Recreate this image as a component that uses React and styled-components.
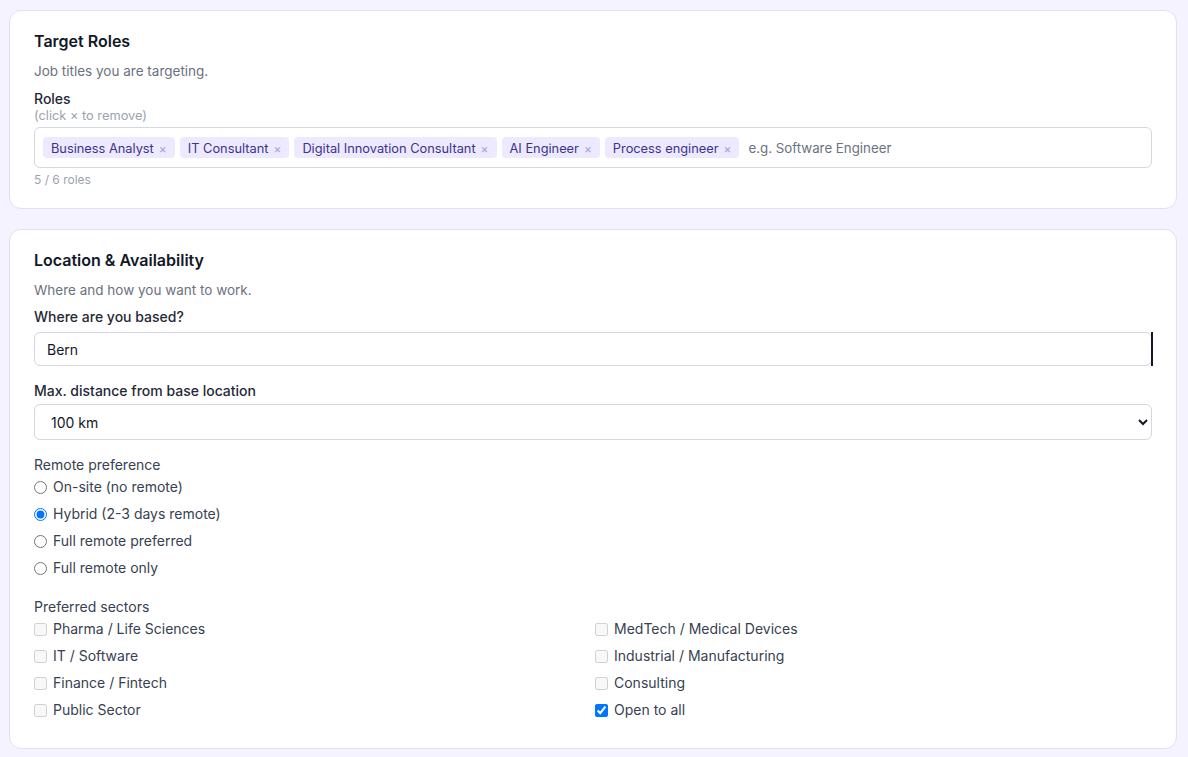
import React from 'react';
import styled, { createGlobalStyle } from 'styled-components';

const GlobalStyle = createGlobalStyle`
  html, body {
    margin: 0;
    padding: 0;
    background: #f5f3ff;
    font-family: Inter, "Noto Sans", sans-serif;
    color: #1f2937;
  }
  * { box-sizing: border-box; }
`;

const Page = styled.div`
  display: flex;
  flex-direction: column;
  gap: 20px;
  padding: 10px 11px 8px 9px;
`;

const Card = styled.section`
  background: #fff;
  border: 1px solid #e2def5;
  border-radius: 12px;
  padding: 20px 24px 20px 24px;
  display: flex;
  flex-direction: column;
`;

const Title = styled.h2`
  margin: 0 0 10px 0;
  font-size: 16px;
  line-height: 20px;
  font-weight: 600;
  color: #111827;
`;

const Subtitle = styled.p`
  margin: 0 0 ${(p) => p.$mb || 9}px 0;
  font-size: 13.5px;
  line-height: 20px;
  color: #6b7280;
`;

const FieldLabel = styled.label`
  display: block;
  font-size: 14px;
  line-height: 18px;
  font-weight: ${(p) => (p.$plain ? 400 : 500)};
  color: ${(p) => (p.$plain ? '#374151' : '#1f2937')};
`;

const Hint = styled.div`
  font-size: 12.8px;
  line-height: 16px;
  color: #9ca3af;
  margin-bottom: 3px;
`;

const TagBox = styled.div`
  display: flex;
  flex-wrap: wrap;
  align-items: center;
  gap: 5px;
  border: 1px solid #d6d6de;
  border-radius: 6px;
  padding: 9px 8px;
  min-height: 41px;
`;

const Tag = styled.span`
  display: inline-flex;
  align-items: center;
  gap: 5px;
  height: 21px;
  padding: 1px 8px 0 8px;
  border-radius: 4px;
  background: #ede9fe;
  color: #3b3390;
  font-size: 12.8px;
  white-space: nowrap;
`;

const TagX = styled.span`
  color: #a5a1d6;
  font-size: 12px;
  cursor: pointer;
`;

const TagInput = styled.input`
  flex: 1;
  border: none;
  outline: none;
  font-family: Inter, sans-serif;
  font-size: 13.3px;
  color: #111827;
  padding: 0 4px;
  &::placeholder { color: #6b7280; }
`;

const Counter = styled.div`
  font-size: 12px;
  line-height: 16px;
  color: #9ca3af;
  margin-top: 4px;
`;

const InputWrap = styled.div`
  position: relative;
  margin: 6px 0 16px 0;
  &::after {
    content: '';
    position: absolute;
    top: 0;
    right: -1px;
    width: 2px;
    height: 34px;
    background: #111827;
  }
`;

const TextInput = styled.input`
  display: block;
  width: 100%;
  height: 34px;
  border: 1px solid #d6d6de;
  border-radius: 6px;
  padding: 0 12px;
  font-family: Inter, sans-serif;
  font-size: 14px;
  color: #111827;
  outline: none;
`;

const Select = styled.select`
  display: block;
  width: 100%;
  height: 36px;
  border: 1px solid #d6d6de;
  border-radius: 6px;
  padding: 0 12px;
  font-family: Inter, sans-serif;
  font-size: 14px;
  color: #111827;
  background: #fff;
  margin: 4px 0 16px 0;
`;

const OptionList = styled.div`
  display: flex;
  flex-direction: column;
  gap: 9px;
  margin: 4px 0 21px 0;
`;

const OptionGrid = styled.div`
  display: grid;
  grid-template-columns: 1fr 1fr;
  column-gap: 4px;
  row-gap: 9px;
  margin: 4px 0 9px 0;
`;

const Choice = styled.label`
  display: flex;
  align-items: center;
  gap: 6px;
  font-size: 14px;
  line-height: 18px;
  color: #374151;
  input {
    margin: 0;
    width: 13px;
    height: 13px;
  }
`;

const roles = [
  'Business Analyst',
  'IT Consultant',
  'Digital Innovation Consultant',
  'AI Engineer',
  'Process engineer',
];

const remote = [
  { label: 'On-site (no remote)', checked: false },
  { label: 'Hybrid (2-3 days remote)', checked: true },
  { label: 'Full remote preferred', checked: false },
  { label: 'Full remote only', checked: false },
];

const sectors = [
  { label: 'Pharma / Life Sciences' },
  { label: 'MedTech / Medical Devices' },
  { label: 'IT / Software' },
  { label: 'Industrial / Manufacturing' },
  { label: 'Finance / Fintech' },
  { label: 'Consulting' },
  { label: 'Public Sector' },
  { label: 'Open to all', checked: true },
];

export default function App() {
  return (
    <>
      <GlobalStyle />
      <Page>
        <Card>
          <Title>Target Roles</Title>
          <Subtitle>Job titles you are targeting.</Subtitle>
          <FieldLabel>Roles</FieldLabel>
          <Hint>(click × to remove)</Hint>
          <TagBox>
            {roles.map((r) => (
              <Tag key={r}>
                {r}
                <TagX>×</TagX>
              </Tag>
            ))}
            <TagInput placeholder="e.g. Software Engineer" />
          </TagBox>
          <Counter>5 / 6 roles</Counter>
        </Card>

        <Card>
          <Title>Location &amp; Availability</Title>
          <Subtitle $mb={8}>Where and how you want to work.</Subtitle>
          <FieldLabel>Where are you based?</FieldLabel>
          <InputWrap>
            <TextInput defaultValue="Bern" />
          </InputWrap>
          <FieldLabel>Max. distance from base location</FieldLabel>
          <Select defaultValue="100">
            <option value="25">25 km</option>
            <option value="50">50 km</option>
            <option value="100">100 km</option>
            <option value="200">200 km</option>
          </Select>

          <FieldLabel $plain>Remote preference</FieldLabel>
          <OptionList>
            {remote.map((o) => (
              <Choice key={o.label}>
                <input type="radio" name="remote" defaultChecked={o.checked} />
                {o.label}
              </Choice>
            ))}
          </OptionList>

          <FieldLabel $plain>Preferred sectors</FieldLabel>
          <OptionGrid>
            {sectors.map((s) => (
              <Choice key={s.label}>
                <input
                  type="checkbox"
                  defaultChecked={!!s.checked}
                  disabled={!s.checked}
                />
                {s.label}
              </Choice>
            ))}
          </OptionGrid>
        </Card>
      </Page>
    </>
  );
}
